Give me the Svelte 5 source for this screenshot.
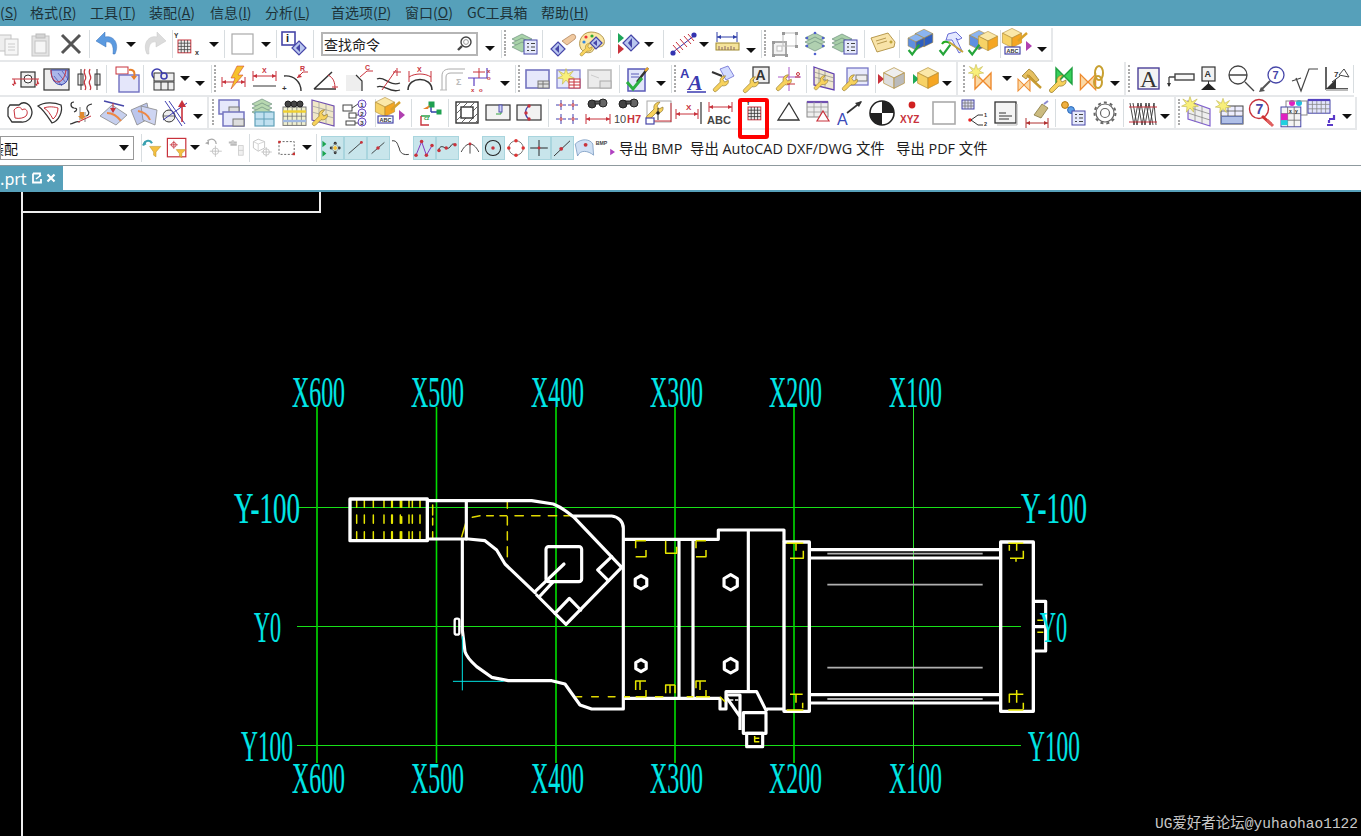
<script>
const L=(d,c='#333',w=1)=>`<path d="${d}" fill="none" stroke="${c}" stroke-width="${w}"/>`;
const F=(d,c,s='none',w=1)=>`<path d="${d}" fill="${c}" stroke="${s}" stroke-width="${w}"/>`;
const R=(x,y,w,h,f='none',s='#333',sw=1)=>`<rect x="${x}" y="${y}" width="${w}" height="${h}" fill="${f}" stroke="${s}" stroke-width="${sw}"/>`;
const C=(x,y,r,f='none',s='#333',sw=1)=>`<circle cx="${x}" cy="${y}" r="${r}" fill="${f}" stroke="${s}" stroke-width="${sw}"/>`;
const T=(x,y,t,z=8,c='#333',w=700)=>`<text x="${x}" y="${y}" font-size="${z}" font-family="Liberation Sans" font-weight="${w}" fill="${c}">${t}</text>`;
const G=(x,y,s,inner,r=0)=>`<g transform="translate(${x} ${y}) rotate(${r}) scale(${s})">${inner}</g>`;
const RED='#c8323c',BL='#4646a8';
const wrench=(x,y,s=1,r=0)=>G(x,y,s*.9,F('M-9 6L-2 -1C-3 -5 0 -8 4 -8L1 -4L3 -1L7 -3C8 1 4 4 0 3L-6 9C-8 11 -11 8 -9 6Z','#f7d25c','#8c7228',.7),r);
const cube=(x,y,s=1,a='#fbe8a8',b='#f7d266',c='#f5a623')=>G(x,y,s,F('M0 -8L8 -4L0 0L-8 -4Z',a,'#b08a30',.5)+F('M-8 -4L0 0V8L-8 4Z',b,'#b08a30',.5)+F('M8 -4L0 0V8L8 4Z',c,'#b08a30',.5));
const check=(x,y)=>G(x,y,.9,L('M-6 0L-2 5L6 -6','#25a53a',2.4));
const star=(x,y,s=1)=>G(x,y,s,F('M0 -7L1.5 -2.5L6 -5L3 -1L7 1L2.5 1.5L3 6L0 2.5L-3 6L-2.5 1.5L-7 1L-3 -1L-6 -5L-1.5 -2.5Z','#f8ef7a','#bdb24a',.5));
const bow=(x,y,s=1,c='#fbd9a6',e='#ee8a2e')=>G(x,y,s,F('M-8 -8L0 0L-8 8Z',c,e,1.4)+F('M8 -8L0 0L8 8Z',c,e,1.4));
const stack=(x,y,c='#a9d3a9')=>[0,4,8].map(d=>F(`M${x} ${y+d-5}L${x+10} ${y+d}L${x} ${y+d+5}L${x-10} ${y+d}Z`,c,'#6f8f80',.7)).join('');
const list=(x,y,w=13,h=14)=>R(x,y,w,h,'#e6eafc',BL)+L(`M${x+3} ${y+3.5}h2M${x+7} ${y+3.5}h4M${x+3} ${y+7}h2M${x+7} ${y+7}h4M${x+3} ${y+10.5}h2M${x+7} ${y+10.5}h4`,'#444');
const diamond=(x,y,r=7)=>F(`M${x} ${y-r}L${x+r} ${y}L${x} ${y+r}L${x-r} ${y}Z`,'#b9c6ef',BL,1.2)+F(`M${x+1} ${y-r+3}L${x+1} ${y+r-3}L${x-3} ${y}Z`,BL);
const sheet=(x,y,w,h,f='#e2e6fb',s='#7070c0')=>R(x,y,w,h,f,s,1.4);
const play=(x,y,c='#c8323c')=>F(`M${x} ${y-5}L${x+6} ${y}L${x} ${y+5}Z`,c);
const grid=(x,y,n,m,p,s='#555',f='#f2f2f2',b=RED)=>{let d='';for(let i=1;i<n;i++)d+=`M${x+i*p} ${y}v${m*p}`;for(let j=1;j<m;j++)d+=`M${x} ${y+j*p}h${n*p}`;return R(x,y,n*p,m*p,f,b)+L(d,s,.8)};
const dim=(x1,x2,y,c=RED)=>L(`M${x1} ${y-5}v10M${x2} ${y-5}v10M${x1} ${y}H${x2}`,c)+F(`M${x1} ${y}l4 -2v4ZM${x2} ${y}l-4 -2v4Z`,c);
const abc=(x,y)=>R(x,y,15,7,'#fff',BL,1.2)+T(x+1.5,y+6,'ABC',5.5,'#333');
const I={
copy:R(3,6,13,16,'#eee','#c4c4c4')+R(10,10,13,16,'#f6f6f6','#c4c4c4')+L('M13 15h7M13 18h7M13 21h7','#ccc'),
paste:R(7,7,17,20,'#e4e4e4','#c4c4c4')+R(11,5,9,4,'#d4d4d4','#bbb')+R(10,12,11,12,'#f6f6f6','#c4c4c4'),
x:L('M6 6L24 24M24 6L6 24','#555',3),
undo:F('M22 25C27 14 20 6 12 8V3L3 12L13 18V13C18 12 21 16 20 25Z','#5b9ae0','#3a70b8',.5),
redo:F('M8 25C3 14 10 6 18 8V3L27 12L17 18V13C12 12 9 16 10 25Z','#dcdcdc','#c8c8c8',.5),
gridxy:T(1,9,'Y',6.5)+grid(5,11,4,4,3.2,'#444','#eee')+T(22,26,'x',7),
box:R(5,5,21,20,'#fff','#aaa',1.2),
info:R(3,3,13,13,'#fff',BL,1.6)+T(7,13,'i',11,'#222')+diamond(20,19,7),
stacklist:stack(12,10)+list(14,11),
hand:diamond(9,20,7)+F('M13 12L22 6C25 4 28 7 26 10L18 16Z','#f0c9a0','#a87a50',.7),
palette:F('M14 3C23 3 29 9 27 15C25 20 19 16 17 20C15 25 8 25 4 20C0 13 5 3 14 3Z','#fbe7a4','#a08030',.8)+C(9,8,1.6,'#e33','none')+C(15,7,1.6,'#3a3','none')+C(7,13,1.6,'#38d','none')+diamond(19,14,6)+wrench(10,20,.8),
playd:play(5,9,'#1ea55a')+play(5,20)+diamond(18,14,8),
hatch:L('M3 24L26 6','#3333b0')+C(25,6,2.6,'#3333b0','none')+C(4,24,2.6,'#3333b0','none')+L('M7 13l7 8M11 10l7 8M15 7l7 8M4 16l7 8M19 5l6 7',RED),
ruler:dim(5,25,8,'#2f3fa8')+R(4,14,23,7,'#f5e39a','#a08a30')+L('M7 17v4M10 18v3M13 17v4M16 18v3M19 17v4M22 18v3','#866'),
squares:R(3,13,13,13,'#f3f3f3','#aaa',2)+R(7,17,5,5,'#fff','#bbb')+R(13,4,13,13,'none','#bbb')+`<g fill="#999"><rect x="12" y="3" width="3" height="3"/><rect x="25" y="3" width="3" height="3"/><rect x="25" y="16" width="3" height="3"/><rect x="2" y="12" width="3" height="3"/><rect x="2" y="25" width="3" height="3"/><rect x="15" y="25" width="3" height="3"/></g>`,
stackb:stack(15,9,'#b0d0b0')+C(7,9,1.3,'#5060d0','none')+C(23,9,1.3,'#5060d0','none')+C(15,4,1.3,'#5060d0','none')+C(15,25,1.3,'#5060d0','none')+C(7,17,1.3,'#5060d0','none')+C(23,17,1.3,'#5060d0','none'),
stackg:stack(12,10,'#a9cfa9')+list(14,11),
tag:F('M3 9L20 4L27 13L26 18L9 23Z','#f8e3a8','#b09040',.9)+L('M8 12l10 -3M9 15l10 -3','#b89a50')+C(23,13,1,'#fff','#a80'),
bc:cube(19,9,1.1,'#8bb4f0','#5f8fe0','#2f5fc0')+cube(11,13,1,'#8bb4f0','#5f8fe0','#2f5fc0')+check(9,21),
hc:F('M12 5L20 3L26 9L22 11L20 9L26 22L23 24L16 11L10 11Z','#e4e8ff','#5a60d0',.9)+L('M6 15C8 11 12 13 14 14','#2a2',2)+check(9,21)+L('M13 13L27 23','#c7a43a',2),
bcc:cube(13,11,1.2,'#8bb4f0','#5f8fe0','#2f5fc0')+cube(22,12,1.2)+check(8,21),
cabc:cube(9,9,1.2)+L('M15 12L24 4','#d9a22a',2.4)+abc(2,18)+play(23,17,'#b040b0'),
hl:R(-1,7,3,10,'none',RED)+L('M-2 12L4 6M-2 18L4 12',RED),
dimhole:R(10,8,14,15,'#eee','#333',1.2)+C(17,15,4,'#fff')+L('M1 15H28',RED)+F('M3 15v7l-2 -2h4zM26 15v7l-2 -2h4z',RED,RED,.4),
hcurve:R(2,5,25,21,'#eee','#333',1.2)+F('M9 6C9 24 24 24 26 14V6Z','#aab6ea','#3747b0')+L('M12 12l8 10M16 9l8 10M20 7l6 8',BL,.7)+L('M9 6C9 22 22 22 24 6',RED),
spring:R(5,10,5,11,'#eee','#333')+R(22,10,5,11,'#eee','#333')+L('M12 5C9 10 15 12 12 16C9 20 15 22 12 26',RED,1.2)+L('M17 5C14 10 20 12 17 16C14 20 20 22 17 26',RED,1.2)+L('M8 5V26M24 5V26','#333'),
note:R(5,3,12,7,'#fff',RED)+sheet(8,11,20,17,'#e4e6fa')+L('M18 6C24 5 24 10 23 13',"#e8802a",2)+F('M20 12h6l-3 4z','#e8802a'),
tbl:C(9,10,5,'none','#3d3db0',1.6)+R(6,9,20,8,'#eee','#333')+R(6,18,20,8,'#eee','#333')+L('M13 18v8M20 18v8','#333')+C(16,12,3,'none','#3d3db0',1.6),
light:dim(3,26,18)+F('M18 2L25 2L19 11L24 11L12 25L16 14L12 14Z','#f6c12c','#c8322c',.5),
dimx:dim(3,26,12)+T(12,9,'X',7,RED)+L('M3 22H26','#555',1.2),
arcr:L('M4 12C14 11 21 18 21 27','#333',1.4)+T(2,27,'+',8)+L('M17 14L23 8H28',RED)+F('M17 14l5 -1l-3 -3z',RED)+T(20,7,'R',7,RED),
ang:L('M2 25H24M2 25L20 8','#333',1.5)+L('M16 11C22 14 23 19 23 25',RED)+L('M20 23H26',RED),
cham:F('M3 11H13L19 17V27H3Z','#eee')+L('M13 11L19 17V27','#333',1.2)+L('M17 13L24 7H30',RED)+T(22,6,'C',7,RED),
wave:L('M3 15C10 11 15 23 26 19M3 23C10 19 15 30 26 26','#333',1.3)+L('M8 26L22 6',RED)+L('M19 8H27M23 4V12',RED),
arcx:L('M3 26C3 12 27 12 27 26','#333',1.6)+L('M4 7V18M26 7V18',RED)+L('M4 13C10 9 20 9 26 13',RED)+T(12,8,'X',7,RED),
fil:L('M5 26V12C5 7 8 5 13 5H28M9 26V13C9 10 11 9 14 9H26','#aaa')+T(19,21,'Σ',9,'#bbb')+L('M3 26h7','#bbb'),
rg:L('M3 14H22V4M9 14V22M22 14V8','#5c3fc0',1.2)+L('M8 8h12M14 4v10',RED)+T(22,9,'x',6,RED)+T(22,16,'o',6,RED)+T(6,28,'x',6,RED)+T(14,28,'o',6,RED),
b1:R(3,6,23,18,'#e6e8fb','#7474c0',1.6)+R(15,17,11,7,'#ddd','#777')+L('M15 20h11M20 17v7','#777'),
b2:R(3,6,23,18,'#e4e8fb','#8a8ad0',1.4)+star(12,13,1.2)+R(15,15,11,9,'#fff',RED)+L('M15 18h11M15 21h11M20 15v9',RED),
b3:R(3,6,23,18,'#ececec','#bbb',1.6)+R(15,17,11,7,'#e4e4e4','#aaa')+L('M6 11l8 3','#ccc'),
cl:R(5,5,17,22,'#e3e6fa','#5a5ab8',1.5)+L('M8 10h8M8 13h8','#5a5ab8')+L('M14 18L25 4','#333',2.4)+L('M22 7L25 4','#e8a62a',2.4)+L('M4 18L10 25L19 14','#2bb040',3),
aa:T(1,14,'A',13,'#3a3ab0')+`<text x="9" y="26" font-size="22" font-style="italic" font-weight="700" font-family="Liberation Serif" fill="#3a3ab0">A</text>`+L('M8 28H27','#3a3ab0',1.5),
wa:F('M10 5L18 2L24 12L16 16Z','#d3dcff','#6a6ad0',.8)+L('M2 8L12 12','#333',2)+wrench(12,19,1),
wab:R(11,3,16,16,'#eee','#444',1.3)+T(13.5,16,'A',14,'#333')+wrench(10,20,1),
wc:L('M16 3V27M5 13H28','#a95ac8')+L('M22 13h5',RED)+C(25,10,1.5,'none',RED)+wrench(12,18,1)+L('M14 20H22',RED),
ws:F('M6 3L26 10V26L6 21Z','#f0e8d0','#6040b0',1.3)+L('M6 8L26 14M6 13L26 18M11 4V22M17 6V24','#888',.7)+wrench(14,18,.9),
ws2:R(7,4,21,17,'#e8eafc','#7777c6',1.3)+R(16,11,11,6,'#eee','#777')+wrench(11,18,1),
pc1:play(2,15)+cube(18,14,1.3,'#eee','#ddd','#bbb'),
pc2:play(3,15,'#1faa55')+cube(18,14,1.3),
bs:bow(15,17,1)+star(8,8,1.1),
bh:bow(10,21,.75)+F('M8 12L15 5L19 8L25 16L22 18L15 11L12 15Z','#e6c060','#8d7020',.7)+L('M13 11L27 24','#c79a30',2.4),
bw:bow(17,12,1,'#37d05a','#1fa040')+wrench(12,19,1.1),
bl:bow(10,18,.95)+`<ellipse cx="21" cy="9" rx="4" ry="7" fill="none" stroke="#c8a030" stroke-width="2"/><ellipse cx="20" cy="18" rx="4" ry="6" fill="none" stroke="#c8a030" stroke-width="2"/>`,
abox:R(4,4,21,21,'#f3f3f3','#4a3f98',1.4)+`<text x="6" y="23" font-size="24" font-family="Liberation Serif" fill="#333">A</text>`,
lead:R(10,10,19,6,'#f7f7f7','#444',1.4)+L('M4 13H10M4 13V22','#444',1.3)+F('M4 23l-2 -4h4z','#333'),
astand:R(7,3,13,14,'#f2f2f2','#333',1.2)+T(9.5,13,'A',9,'#333')+L('M13.5 17V20','#333')+F('M13.5 19L21 26H6Z','#222'),
lens:C(11,11,9,'#fff','#444',1.3)+L('M2 11H20M18 18L27 27','#444',1.4),
lens7:C(18,11,8,'#fff',BL,1.3)+T(14.5,15,'7',11,BL)+L('M12 17L3 26','#555',2)+F('M1 28l6 -1l-4 -4z','#555'),
sq:L('M3 17L12 14M7 14L12 27L20 5H29','#444',1.2),
ang2:L('M6 3V25H28','#222',1.4)+R(6,25,22,2,'#bbb','none')+F('M6 25L16 15V25Z','#333')+T(14,13,'7',8)+L('M19 11L24 5L29 13Z','#444')+L('M12 18L20 12','#333'),
heart:F('M5 7H14C19 2 26 6 27 14C27 20 22 25 16 24H7L3 18V10Z','none','#333',1.3)+L('M9 12C13 7 17 10 17 12C21 9 24 14 21 18C19 20 14 21 10 20Z',RED),
cor:F('M3 8C9 4 19 4 26 7C28 13 24 23 17 25C13 19 9 12 3 8Z','none','#333',1.3)+L('M9 10C14 8 20 9 23 10C23 14 21 19 18 21C15 16 13 12 9 10Z',RED),
cur:L('M8 4C4 4 4 9 8 10C12 10 11 13 8 14M26 6C20 7 20 11 22 13C24 15 22 18 20 18M4 26C8 26 10 22 14 24',"#333",1.2)+L('M14 9V22M19 14V24','#333',.6)+F('M14 14h4v4h2l-4 4l-4 -4h2z','#e08a30')+L('M12 24L25 18',RED),
pl1:F('M2 18L14 7L29 17L18 27Z','#c7d0ee','#888',.8)+L('M6 3L26 8',BL,1.4)+L('M15 5V12',RED)+F('M15 15l-3 -5h6z',RED)+L('M9 15C15 15 20 19 23 23','#ee8844',2),
pl2:F('M2 12L18 5L21 20L8 27Z','#bcc6ec','#888',.8)+F('M12 8L28 12L26 27L14 22Z','#ced5f2','#888',.8)+L('M9 13C15 14 19 17 21 22','#ee8844',2),
mir:C(9,18,6,'#eee','#333')+L('M3 18H15','#333',.7)+L('M5 3L22 28M9 3L25 26M3 22L27 5','#3d3db0')+L('M22 24V6',RED,1.6)+F('M22 2l-4 7h8z',RED),
v1:R(3,2,20,14,'#e6e8fb','#7474c0',1.5)+R(13,9,10,7,'#ddd','#777')+R(7,14,21,14,'#e6e8fb','#7474c0',1.5)+R(17,21,11,7,'#ddd','#777'),
v2:stack(15,6,'#b8d8b0')+R(8,14,19,14,'#c0e0f0','#60a0b8',1.2)+L('M17 14V28M8 21H27','#60a0b8'),
v3:grid(4,9,5,4,4.6,'#777','#f0f0d0','#777')+L('M4 13.5H27','#f0d030',2.4)+L('M4 23H27','#a0b8e0',2.4)+C(9,6,3,'#444','#222')+C(15,6,3,'#444','#222')+C(21,6,3,'#444','#222'),
v4:F('M4 2L26 8V28L4 22Z','#f0e8c8','#7050b0',1.2)+L('M4 8L26 14M4 14L26 20M11 4V24M18 6V26','#999',.7)+wrench(13,19,1),
v5:R(3,7,9,6,'#fff','#444')+R(9,15,7,5,'#fff','#444')+R(6,23,9,4,'#fff','#444')+L('M12 10L18 6M16 17H18M15 25H18','#444')+[[22,6,'1'],[22,15,'2'],[22,24,'3']].map(a=>C(a[0],a[1],4,'#f4f0ff','#6a4ac0')+T(a[0]-1.8,a[1]+2.5,a[2],6,'#333')).join(''),
axes:L('M16 14L16 7M16 14H24','#2f3fa8',1.4)+R(14,4,5,5,'#1fa050','#1fa050')+R(22,12,4,4,'#1fa050','#1fa050')+L('M6 18H15','#1a9a3a',1.4)+L('M6 18V27H14',RED,1.4)+F('M8 11L15 7L13 11Z','#e8802a')+T(9,22,'cz',5,'#1a9a3a'),
hb:R(4,4,22,21,'#fff','#333',1.4)+L('M4 9l5 -5M4 16l12 -12M4 23l19 -19M9 25l17 -17M16 25l10 -10M23 25l3 -3','#666')+R(9,9,12,11,'#fff','#333',1.4),
tb1:R(3,7,24,15,'#f2f2f2','#333',1.2)+L('M18 7V16H13','#33a040')+R(16,7,3,7,'#d0d4f4','#5050b0'),
tb2:R(3,7,24,15,'#f2f2f2','#333',1.2)+L('M16 7C10 11 10 18 16 22',BL,1.4)+C(15,8,1.7,RED,'none')+C(12,15,1.7,RED,'none')+C(15,21,1.7,RED,'none'),
pat:[[4,4],[16,4],[4,18],[16,18]].map(a=>L(`M${a[0]+5} ${a[1]-2}v4M${a[0]+5} ${a[1]+4}v4M${a[0]} ${a[1]+3}h3M${a[0]+7} ${a[1]+3}h3`,'#4040b0')+C(a[0]+5,a[1]+3,1.2,'none',RED)).join(''),
bino:G(15,6,1,C(-6,0,4,'#444','#222')+C(5,-1,4,'#666','#222')+R(-3,-3,5,3,'#555','#222'))+dim(3,27,21),
h7:G(16,6,1,C(-6,0,4,'#444','#222')+C(5,-1,4,'#666','#222')+R(-3,-3,5,3,'#555','#222'))+T(1,25,'10',11,'#444',400)+T(14,25,'H7',11,RED,700),
wd:R(4,3,24,21,'#fff','#aaa')+L('M5 23H28M28 5V24',RED)+wrench(13,12,1.1)+R(3,20,8,6,'#fff',BL,1.2)+L('M15 10V22','#333')+C(15,15,1.8,'#222','none'),
xdim:dim(2,24,16)+T(12,12,'X',8,RED)+L('M27 4V26','#333',1.2),
abcd:dim(3,26,9)+T(1,26,'ABC',11,'#444',700),
tgrid:T(5,7,'Y',6.5)+grid(7,9,4,4,3.2,'#333','#eee'),
tri:F('M15 5L25 22H4Z','none','#333',1.3),
ttab:R(3,4,21,15,'#eee','#888')+L('M3 4H24','#7050b0',2.2)+L('M3 9H24M3 14H24M10 4V19M17 4V19','#999',.8)+F('M19 13L25 23H13Z','#fff',RED,1.2),
ae:T(2,27,'A',16,'#3a4ab8',400)+L('M12 15L26 4','#333',1.6)+F('M27 3l-7 2l4 4z','#333'),
cir:C(15,15,12,'#fff','#222',1.6)+F('M15 3A12 12 0 0 1 27 15H15ZM15 27A12 12 0 0 1 3 15H15Z','#222'),
xyz:C(14,7,3.4,'#d02020','none')+T(2,25,'XYZ',10,RED),
wbox:R(4,4,22,22,'#fff','#aaa',1.6),
br:grid(2,2,4,3,3,'#777','#dcdcf4',BL)+C(10,22,1.8,'#e22','none')+L('M11 22L18 17H23M11 22L18 27H23','#333')+T(24,19,'1',5.5)+T(24,28,'2',5.5),
para:R(4,4,21,21,'#f4f4f4','#333',1.3)+L('M8 15H15M8 18H21M8 21H18','#333')+L('M6 27H26M26 6V27','#bbb',1.2),
brush:dim(4,26,25,'#b03030')+F('M12 17L20 6L26 10L19 20Z','#cbbb80','#786a30',.7)+L('M22 6L26 3','#8b8ad0',2),
gl:C(7,7,3.4,'#f0b040','#b07810')+C(13,12,3.4,'#5fa0e8','#2a68b8')+list(14,13,13,14),
gear:C(15,15,9,'none','#666',1.2)+C(15,15,4.5,'none','#666',1.2)+`<circle cx="15" cy="15" r="10.5" fill="none" stroke="#666" stroke-width="2" stroke-dasharray="3 3"/>`,
spr:L('M3 5L7 27L11 5L15 27L19 5L23 27L27 5L29 27M6 5L10 27L14 5L18 27L22 5L26 27','#333',.9)+L('M2 9H30M2 24H30',RED,1),
nw:F('M5 3L27 11V28L5 21Z','#eee','#8060d0',1.2)+L('M5 9L27 16M5 15L27 22M12 5V24M19 8V26','#888',.8)+star(7,7,1.2),
nt:R(5,8,22,18,'#eef','#444')+L('M5 13H27M5 18H27M12 8V26M19 8V26','#555',.8)+R(5.5,18.5,21,7,'#b0c0e8','#6a7ab0')+star(7,8,1.1),
help:C(13,11,9.5,'#fff',RED,1.4)+T(9.5,16,'7',14,BL)+L('M16 18L25 26','#d03030',3)+L('M21 22L27 28','#e06060',3),
tcols:C(15,5,3,'#e020c0','none')+C(22,5,3,'#20c0e0','none')+R(9,3,21,14,'none','#888')+grid(4,9,3,3,6.6,'#666','#f4f4f4',BL)+R(4,15.6,6.6,6.6,'#e020c0','none')+R(4,22.2,6.6,5,'#20d0e0','none')+T(12,15,'x',5,'#222')+T(18,15,'y',5,'#222'),
tbr:grid(2,2,5,3,4.4,'#888','#e4e6fb',BL)+L('M2 2H24','#5544c0',2.2)+L('M23 21H28V17M21 27H27','#5a3ac8',2.2)+L('M23 22V25','#5a3ac8',2.2),
ff1:L('M4 12C7 4 13 5 15 9','#3aa0b0',2.6)+F('M3 11l3 -5l2 5z','#3aa0b0')+F('M12 13H26L20 20V26L17 24V20Z','#f5c040','#b08a20',.6),
ff2:R(3,3,23,23,'#fff',RED,1.5)+C(11,11,3,'none',RED)+L('M11 6V16M6 11H16',RED)+F('M14 17H26L21 22V27L18 25V22Z','#f5c040','#b08a20',.6),
ff3:L('M8 6C15 1 19 6 19 10','#aaa',1.6)+F('M5 9l5 -3l0 5z','#aaa')+C(18,19,4,'none','#bbb')+L('M18 12V26M11 19H26','#bbb'),
ff4:L('M6 8h10M8 11h8','#bbb',2.5)+R(18,12,6,12,'#f0f0f0','#ccc')+L('M18 18h6','#ccc')+C(11,7,2,'#ccc','none'),
ff5:F('M9 4L17 7L17 15L9 19L3 15V7Z','none','#bbb')+L('M3 7L9 10L17 7M9 10V19','#ccc')+C(19,20,4,'none','#bbb')+L('M19 14V26M13 20H26','#bbb'),
sel:`<rect x="5" y="7" width="19" height="16" fill="none" stroke="#444" stroke-dasharray="2.5 2"/><g fill="#c33"><rect x="4" y="6" width="3" height="3"/><rect x="22" y="21" width="3" height="3"/></g>`,
sn1:F('M3 6l5 4l-5 4zM3 18l5 4l-5 4z','#1aa550')+C(14,15,1.8,'#333','none')+C(19,9,1.8,'#333','none')+C(24,15,1.8,'#333','none')+C(19,21,1.8,'#333','none')+F('M19 12l3 3l-3 3l-3 -3z','#f5c23a')+L('M14 15L19 9L24 15L19 21Z','#777',.7),
sn2:L('M7 22L23 8','#222')+C(23,8,1.8,RED,'none'),
sn3:L('M7 22L23 8','#222')+C(15,15,2.2,RED,'none'),
sn4:L('M5 6C12 5 12 12 14 15C15 22 20 24 26 23','#333',1.2),
sn5:L('M5 24L12 7L18 24L25 12','#8030c0',1.2)+[[5,24],[12,7],[18,24],[25,12]].map(a=>C(a[0],a[1],2.2,RED,'none')).join(''),
sn6:L('M4 18C9 6 14 22 20 12C22 9 24 10 26 12','#222',1.2)+C(5,18,2.2,RED,'none')+C(14,15,2.2,RED,'none')+C(25,11,2.2,RED,'none'),
sn7:L('M4 20C8 12 12 10 15 10C18 10 22 12 26 20M15 10V22','#333',1.1)+C(15,10,1.8,RED,'none'),
sn8:C(15,15,9.5,'none','#222',1.3)+C(15,15,2.2,RED,'none'),
sn9:C(15,15,9,'none','#777',1.2)+[[15,6],[24,15],[15,24],[6,15]].map(a=>C(a[0],a[1],2.2,'#d33','none')).join(''),
sn10:L('M4 15H26M15 5V25','#222',1.2)+C(15,15,1.8,RED,'none'),
sn11:L('M5 25L25 6','#222',1.1)+C(14,16,2.4,RED,'none'),
sn12:F('M4 10C12 2 23 4 26 10L27 24C20 18 10 17 7 25Z','#cfe0f4','#7a9ac0')+C(17,11,2.4,RED,'none'),
bmp:T(1,11,'BMP',6.5,'#444')+F('M19 16l6 4l-6 4z','#b040c0'),
};
const tok=s=>s.trim().split(/\s+/).map(t=>{
 let m;
 if(t[0]==='|')return{k:'sep',c:+t.slice(1),w:1};
 if(t[0]===':')return{k:'grip',c:+t.slice(1),w:2};
 if(t[0]==='e')return{k:'end',c:+t.slice(1),w:2};
 if((m=t.match(/^v(\d+)(?:\+(\d+))?$/)))return{k:'caret',c:+m[1],w:10,dy:+(m[2]||0)};
 m=t.match(/^(\d+)(!?):(\w+)$/);
 return{k:'ic',c:+m[1],w:m[2]?23:30,hl:!!m[2],n:m[3]};
});
const place=items=>{let right=0;return items.map(it=>{const left=it.x!==undefined?it.x:it.c-it.w/2;const ml=left-right;right=left+it.w;return{...it,ml}})};
const rows=[
 [...tok('10:copy 40:paste 71:x |89 108:undo v131 154:redo |172 188:gridxy v214 |224 242:box v266 |276 294:info |313'),
  {k:'search',x:321,w:157},
  ...tok('v490+4 |501 :505 525:stacklist |542 564:hand 592:palette |610 628:playd v649 |663 684:hatch v704 727:ruler v751+6 |761 :765 785:squares 815:stackb 845:stackg |864 883:tag |899 920:bc 951:hc 981:bcc |1000 1018:cabc v1042+5 e1052')],
 tok('1:hl 26:dimhole 57:hcurve 88:spring |106 126:note |143 163:tbl v185 v200+5 |211 :215 234:light 265:dimx 295:arcr 327:ang 358:cham 389:wave 420:arcx 452:fil 480:rg v505+5 |515 :519 538:b1 569:b2 600:b3 |619 638:cl v661+5 |671 :675 694:aa 725:wa 757:wab 788:wc |806 823:ws 855:ws2 |875 891:pc1 925:pc2 v947+5 e957 :964 983:bs v1007 1029:bh 1062:bw 1093:bl v1115+5 e1125 :1129 1149:abox 1180:lead 1210:astand 1242:lens 1273:lens7 1304:sq 1335:ang2 |1353'),
 tok('20:heart 50:cor 81:cur 113:pl1 144:pl2 175:mir v198+4 e208 :213 231:v1 262:v2 294:v3 323:v4 355:v5 |375 391:cabc |411 430:axes |448 467:hb 498:tb1 529:tb2 |548 567:pat 598:bino 628:h7 658:wd 689:xdim 721:abcd 756:tgrid 789:tri 819:ttab 850:ae 882:cir 913:xyz 944:wbox 975:br 1006:para 1037:brush |1055 1073:gl 1105:gear |1123 1142:spr v1165+4 e1175 :1179 1198:nw 1231:nt 1261:help 1292:tcols 1321:tbr v1347+4 e1356'),
 [{k:'select',x:0,w:134},
  ...tok('|141 152:ff1 177:ff2 v195 213:ff3 236:ff4 |249 263:ff5 287:sel v307 |316 332!:sn1 355!:sn2 378!:sn3 400:sn4 424!:sn5 447!:sn6 470:sn7 493!:sn8 516:sn9 539!:sn10 562!:sn11 584:sn12 607:bmp'),
  {k:'text',x:619,w:71,t:'导出 BMP'},{k:'text',x:690,w:206,t:'导出 AutoCAD DXF/DWG 文件'},{k:'text',x:896,w:91,t:'导出 PDF 文件'}]
].map(place);
const menuSrc=[[0,'(',"S",')'],[30,'格式(','R',')'],[90,'工具(','T',')'],[149,'装配(','A',')'],[210,'信息(','I',')'],[265,'分析(','L',')'],[331,'首选项(','P',')'],[405,'窗口(','O',')'],[467,'GC工具箱','',''],[541,'帮助(','H',')'],[620]];
const menu=menuSrc.slice(0,-1).map((m,i)=>({pre:m[1],key:m[2],post:m[3],w:menuSrc[i+1][0]-m[0]}));
const threadX=[50,73,100,132,155,181,207,240];
const threadY=[[30,52],[75,100],[125,148]];
let th='';threadX.forEach(x=>threadY.forEach(y=>th+=`M${x} ${y[0]}V${y[1]}`));
th+='M157 30V52M157 75V100M157 125V148M217 30V52M217 75V100M217 125V148M185 30V52M185 80V100M185 125V148M278 45V75M278 85V105M278 125V145';
const hexa=(x,y,r)=>{let p=[];for(let i=0;i<6;i++){const a=Math.PI/3*i;p.push((x+r*Math.sin(a)).toFixed(1)+','+(y+r*Math.cos(a)).toFixed(1))}return p.join(' ')};
const labels=[...[['X600',292],['X500',411],['X400',531],['X300',650],['X200',769],['X100',889]].flatMap(a=>[[a[0],a[1],407,53],[a[0],a[1],793,53]]),
 ['Y-100',234,523,66],['Y-100',1021,523,66],['Y0',254,642,27],['Y0',1040,642,27],['Y100',241,761,52],['Y100',1028,761,52]];
</script>

<div class="app">
 <div class="menu">
  {#each menu as m}<span class="mi" style="width:{m.w}px">{m.pre}{#if m.key}<u>{m.key}</u>{/if}{m.post}</span>{/each}
 </div>
 <div class="tools">
  {#each rows as row,ri}
   <div class="row r{ri}">
    {#each row as it}
     {#if it.k==='sep'}<i class="sep" style="margin-left:{it.ml}px"></i>
     {:else if it.k==='grip'}<i class="grip" style="margin-left:{it.ml}px"></i>
     {:else if it.k==='end'}<i class="end" style="margin-left:{it.ml}px"></i>
     {:else if it.k==='caret'}<i class="caret" style="margin-left:{it.ml}px;margin-top:{it.dy*2}px"></i>
     {:else if it.k==='ic'}<span class="ic" class:hl={it.hl} style="margin-left:{it.ml}px;width:{it.w}px"><svg width="30" height="30" viewBox="0 0 30 30">{@html I[it.n]}</svg></span>
     {:else if it.k==='search'}<span class="search" style="margin-left:{it.ml}px;width:{it.w}px"><span>查找命令</span><svg width="20" height="20" viewBox="0 0 20 20"><circle cx="11" cy="8" r="5" fill="#fff" stroke="#444" stroke-width="1.4"/><circle cx="11" cy="8" r="2.4" fill="none" stroke="#999"/><path d="M7 12L3 16" stroke="#444" stroke-width="2.4"/></svg></span>
     {:else if it.k==='select'}<span class="select" style="margin-left:{it.ml}px;width:{it.w}px"><span class="selt">装配</span><b></b></span>
     {:else if it.k==='text'}<span class="txt" style="margin-left:{it.ml}px;width:{it.w}px">{it.t}</span>
     {/if}
    {/each}
   </div>
  {/each}
  <div class="mark"></div>
 </div>
 <div class="tabs">
  <div class="tab"><span class="tn">.prt</span>
   <svg width="12" height="12" viewBox="0 0 12 12"><path d="M2 1.5H9V4M10 7V10.5H2V1.5" fill="none" stroke="#fff" stroke-width="1.8"/><path d="M5 7L10 3" stroke="#fff" stroke-width="1.6"/></svg>
   <svg width="10" height="10" viewBox="0 0 10 10"><path d="M1.5 1.5L8.5 8.5M8.5 1.5L1.5 8.5" stroke="#fff" stroke-width="2.2"/></svg>
  </div>
 </div>
 <div class="canvas">
  <svg class="cad" width="1361" height="644" viewBox="0 192 1361 644">
   <path d="M22 192V836M22 212H320V192" fill="none" stroke="#eee" stroke-width="2"/>
   <g fill="none" stroke="#18e018">
    <path d="M297 507.5H1021M297 626.5H1021M297 745.5H1021" stroke-width="1"/>
    <path d="M317 407V763M436.5 407V763M556 407V763M675 407V763M794 407V763" stroke-width="1.6" stroke="#00dd00"/>
    <path d="M913.5 407V763" stroke-width="1" stroke="#2ce22c"/>
   </g>
   <g transform="translate(340 490) scale(.33333)" fill="none" stroke="#fff" stroke-linejoin="round" stroke-linecap="round">
    <path d={th} stroke="#e6e600" stroke-width="4.5"/>
    <path d="M397 82L420 77M440 77H460M480 77H500M525 77H550M575 77H600M625 77H650M672 77H695M502 35V55M502 80V105M502 125V150M502 170V200M365 140L377 100" stroke="#e0d800" stroke-width="4.5"/>
    <path d="M710 620H725M755 620H775M805 620H825" stroke="#e0d800" stroke-width="4.5"/>
    <rect x="30" y="27" width="232" height="125" stroke-width="10"/>
    <g stroke-width="9.5">
     <path d="M262 32H575L640 42C665 52 685 68 700 80L845 232M700 78H815C835 80 850 95 850 115V657H755L720 645L675 582L635 572H505L455 562L410 530C390 512 378 495 375 485L367 420V147M262 147H385L435 152L470 180L495 222L585 308"/>
     <path d="M379 32V147"/>
     <path d="M590 315L678 403L845 232"/>
     <path d="M585 305L672 222M600 318L640 275"/>
     <rect x="618" y="170" width="107" height="105" rx="8"/>
     <path d="M645 370L688 325L722 360M773 240L815 200M773 240L805 272"/>
     <rect x="344" y="386" width="14" height="48" rx="6" stroke-width="7"/>
    </g>
    <path d="M367 440V600M340 574H490" stroke="#00e4e4" stroke-width="3"/>
   </g>
   <g transform="translate(620 520) scale(.33333)" fill="none" stroke="#fff" stroke-linejoin="round">
    <g stroke-width="9.5">
     <path d="M8 58H295V30H492V65M177 58V535M219 58V535M385 30V515M8 535H300V567H318V515H410L440 575M440 567H490"/>
     <path d="M318 525H360V630M318 530L360 590"/>
     <rect x="370" y="578" width="68" height="62"/>
     <rect x="380" y="640" width="48" height="40"/>
     <polygon points={hexa(63,187,20)}/>
     <polygon points={hexa(332,187,23)}/>
     <polygon points={hexa(63,437,18)}/>
     <polygon points={hexa(332,437,22)}/>
    </g>
    <path d="M330 540h10M345 540h10" stroke-width="5"/>
    <path d="M47 62H78M47 62V85M78 90V110H47M137 62V100H170V80M228 62H258M228 62V85M258 90V110H228M47 510V483H78M60 483V510M78 510V530H47M137 520V495H165M150 495V520M165 495V520M228 505V483H258M240 483V510M258 510V530H228M12 530H30M105 530H130M200 530H220M250 530H270M300 530L315 545M404 648V665H418M404 655H418" stroke="#e6e600" stroke-width="4.5"/>
   </g>
   <g transform="translate(790 520) scale(.33333)" fill="none" stroke="#fff" stroke-linejoin="round">
    <path d="M60 89H630M60 114H630M60 524H630M60 549H630" stroke-width="9.5"/>
    <path d="M112 101H578M112 194H578M112 443H578M112 537H578" stroke="#b0b0b0" stroke-width="5.5"/>
    <path d="M-18 66H58V574H-18Z" stroke-width="10"/>
    <path d="M632 66H730V574H632Z" stroke-width="10"/>
    <path d="M730 244H767V393H730M730 320H767" stroke-width="9.5"/>
    <path d="M658 92V75M680 68V92M700 92V115H660M678 115V125M658 548V523H700M680 510V548M700 548V568M0 115H40V92M18 70V92M0 523H38M18 523V548M38 548V565M742 301H760M742 337H760M-10 70H40M655 70H700M-10 570H40M655 570H700" stroke="#e6e600" stroke-width="4.5"/>
   </g>
   {#each labels as l}
    <text class="lab" x={l[1]} y={l[2]} textLength={l[3]} lengthAdjust="spacingAndGlyphs">{l[0]}</text>
   {/each}
  </svg>
  <div class="wm">UG爱好者论坛@yuhaohao1122</div>
 </div>
</div>

<style>
:global(body){margin:0;background:#fff}
.app{width:1361px;height:836px;position:relative;overflow:hidden;display:flex;flex-direction:column;font-family:"Noto Sans CJK SC","Liberation Sans",sans-serif}
.menu{height:26px;flex:none;background:#56a0ba;display:flex;align-items:center;color:#1d3238;font-size:14px;box-sizing:border-box;padding-bottom:3px}
.mi{flex:none;white-space:nowrap;line-height:20px}
.tools{position:relative;flex:none}
.row{display:flex;align-items:center;width:max-content;border-bottom:2px solid #e6e8ea;box-sizing:border-box}
.r0{height:36px;padding-top:2px}
.r1{height:35px}
.r2{height:33px}
.r3{height:36px;width:1361px;border-bottom:1px solid #8f9a9e}
.ic{flex:none;display:flex;align-items:center;justify-content:center;height:30px;box-sizing:border-box}
.ic svg{flex:none;overflow:visible}
.r3 .ic{height:24px}
.r3 .ic svg{width:24px;height:24px}
.hl{background:#c8e5eb;outline:1px solid #a9d5de;outline-offset:-1px}
.sep{flex:none;width:1px;height:28px;background:#d8dde0}
.grip{flex:none;width:2px;height:28px;background:repeating-linear-gradient(#aaa 0 2px,transparent 2px 3.5px)}
.end{flex:none;width:2px;align-self:stretch;background:#e6e8ea}
.caret{flex:none;width:0;height:0;border-left:5px solid transparent;border-right:5px solid transparent;border-top:5px solid #111}
.search{flex:none;height:24px;border:2px solid #b5b5b5;box-sizing:border-box;display:flex;align-items:center;justify-content:space-between;font-size:14px;color:#222;padding:0 1px;background:#fff}
.select{flex:none;height:24px;border:1.5px solid #999;box-sizing:border-box;display:flex;align-items:center;font-size:14px;color:#111;position:relative;overflow:hidden}
.selt{margin-left:-11px}
.select b{position:absolute;right:4px;top:8px;border-left:5px solid transparent;border-right:5px solid transparent;border-top:6px solid #111}
.txt{flex:none;font-family:"Open Sans","Noto Sans CJK SC",sans-serif;font-size:14.4px;color:#1c1c1c;white-space:nowrap}
.mark{position:absolute;left:738px;top:72px;width:31px;height:41px;border:4px solid #f00;border-radius:3px;box-sizing:border-box}
.tabs{height:24px;flex:none;background:#fff;border-bottom:2px solid #56a0ba;display:flex}
.tab{width:63px;background:#56a0ba;color:#fff;display:flex;align-items:center;font-size:16px;overflow:hidden;padding-bottom:1px;box-sizing:border-box}
.tn{width:31px;flex:none}
.tab svg{flex:none;margin-right:3px}
.canvas{flex:1;background:#000;position:relative;min-height:0}
.cad{display:block}
.lab{font-family:"Liberation Serif",serif;font-size:45px;fill:#00e6e6;stroke:#00e6e6;stroke-width:.2}
.wm{position:absolute;right:3px;bottom:4px;font-family:"Liberation Mono","Noto Sans CJK SC",monospace;font-size:14.5px;color:#c8c8c8;white-space:nowrap}
</style>
